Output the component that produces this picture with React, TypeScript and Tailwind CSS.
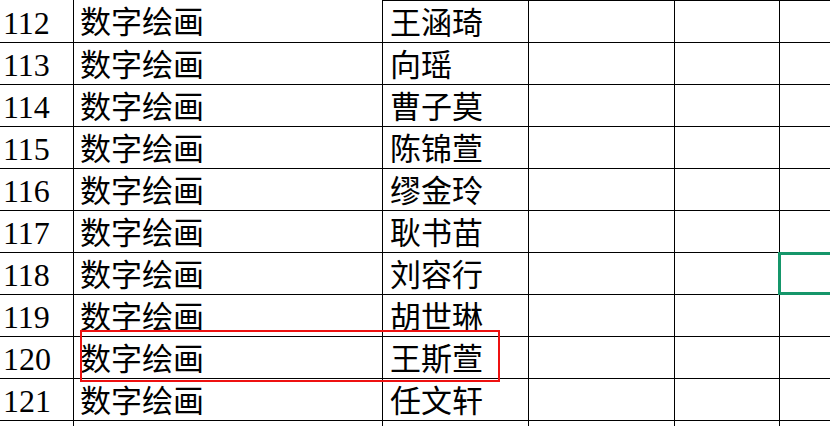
const rows = [
  { no: '112', course: '数字绘画', name: '王涵琦' },
  { no: '113', course: '数字绘画', name: '向瑶' },
  { no: '114', course: '数字绘画', name: '曹子莫' },
  { no: '115', course: '数字绘画', name: '陈锦萱' },
  { no: '116', course: '数字绘画', name: '缪金玲' },
  { no: '117', course: '数字绘画', name: '耿书苗' },
  { no: '118', course: '数字绘画', name: '刘容行' },
  { no: '119', course: '数字绘画', name: '胡世琳' },
  { no: '120', course: '数字绘画', name: '王斯萱' },
  { no: '121', course: '数字绘画', name: '任文轩' },
  { no: '', course: '', name: '' },
];

export default function App() {
  return (
    <div
      className="relative w-[830px] h-[426px] overflow-hidden bg-white text-black"
      style={{ fontFamily: '"Liberation Serif", "Noto Sans CJK SC", serif' }}
    >
      {rows.map((r, i) => (
        <div
          key={i}
          className={`flex border-b border-black ${i === 0 ? 'h-[43px]' : 'h-[42px]'}`}
        >
          <div className="w-[74px] shrink-0 border-r border-black pl-[3px] flex items-center pt-[3px] text-[32px] leading-none">
            {r.no}
          </div>
          <div className="w-[309px] shrink-0 border-r border-black pl-[6px] flex items-center pt-[3px] text-[31px] leading-none">
            {r.course}
          </div>
          <div
            className={`w-[146px] shrink-0 border-r border-black pl-[7px] flex items-center pt-[3px] text-[31px] leading-none ${i === 0 ? 'border-t' : ''}`}
          >
            {r.name}
          </div>
          <div className={`w-[146px] shrink-0 border-r border-black ${i === 0 ? 'border-t' : ''}`} />
          <div className={`w-[105px] shrink-0 border-r border-black ${i === 0 ? 'border-t' : ''}`} />
          <div className={`flex-1 ${i === 0 ? 'border-t border-black' : ''}`} />
        </div>
      ))}

      {/* red highlight around row 120 */}
      <div className="absolute left-[80px] top-[330px] w-[420px] h-[52px] border-2 border-[#ee1111]" />

      {/* active cell selection */}
      <div className="absolute left-[778px] top-[252px] w-[70px] h-[43px] border-[3px] border-[#15966a]" />
    </div>
  );
}
